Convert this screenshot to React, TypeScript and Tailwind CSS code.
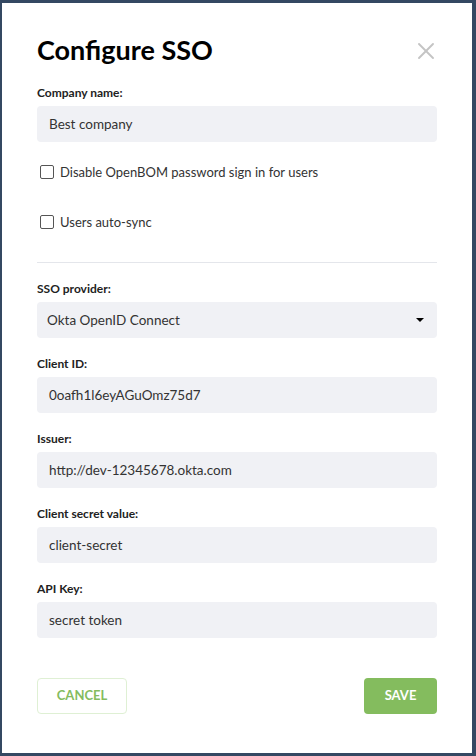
import { X } from 'lucide-react'

const fields = [
  { label: 'Client ID:', value: '0oafh1l6eyAGuOmz75d7' },
  { label: 'Issuer:', value: 'http://dev-12345678.okta.com' },
  { label: 'Client secret value:', value: 'client-secret' },
  { label: 'API Key:', value: 'secret token' },
]

function Label({ children }: { children: React.ReactNode }) {
  return <div className="text-[12px] font-bold leading-[14px] text-[#222] mb-[6px]">{children}</div>
}

function TextInput({ value }: { value: string }) {
  return (
    <div className="h-[36px] rounded-[4px] bg-[#f0f1f5] px-[12px] flex items-center text-[13.5px] text-[#333]">
      {value}
    </div>
  )
}

function Check({ label }: { label: string }) {
  return (
    <label className="flex items-center gap-[6px] pl-[3px] text-[13px] leading-[20px] text-[#333]">
      <span className="w-[14px] h-[14px] border border-[#555] rounded-[2px] bg-white" />
      {label}
    </label>
  )
}

export default function App() {
  return (
    <div className="w-[476px] h-[756px] bg-[#344862] pt-[3px] pl-[2px] pr-[4px] pb-[3px] font-['Lato',sans-serif]">
      <div className="relative h-full bg-white px-[35px] pt-[27px]">
        {/* Header */}
        <div className="flex items-center justify-between">
          <h1 className="text-[27px] font-bold leading-[40px] text-black">Configure SSO</h1>
          <X className="w-[28px] h-[28px] text-[#c4c4c4] -mr-[3px] mt-[2px]" strokeWidth={1.6} />
        </div>

        <div className="mt-[16px]">
          <Label>Company name:</Label>
          <TextInput value="Best company" />
        </div>

        <div className="mt-[20px] space-y-[30px]">
          <Check label="Disable OpenBOM password sign in for users" />
          <Check label="Users auto-sync" />
        </div>

        <div className="mt-[30px] border-t border-[#e4e6eb]" />

        <div className="mt-[19px]">
          <Label>SSO provider:</Label>
          <div className="h-[36px] rounded-[4px] bg-[#f0f1f5] px-[10px] flex items-center justify-between text-[13.5px] text-[#333]">
            Okta OpenID Connect
            <span className="w-0 h-0 border-l-[4px] border-r-[4px] border-t-[4px] border-l-transparent border-r-transparent border-t-black mr-[3px]" />
          </div>
        </div>

        {fields.map(f => (
          <div key={f.label} className="mt-[19px]">
            <Label>{f.label}</Label>
            <TextInput value={f.value} />
          </div>
        ))}

        {/* Footer */}
        <div className="mt-[40px] flex justify-between">
          <button className="h-[36px] w-[90px] rounded-[4px] border border-[#dff0d4] text-[13px] font-bold text-[#84bc5e]">
            CANCEL
          </button>
          <button className="h-[36px] w-[73px] rounded-[4px] bg-[#84bc5e] text-[13px] font-bold text-white">
            SAVE
          </button>
        </div>
      </div>
    </div>
  )
}
